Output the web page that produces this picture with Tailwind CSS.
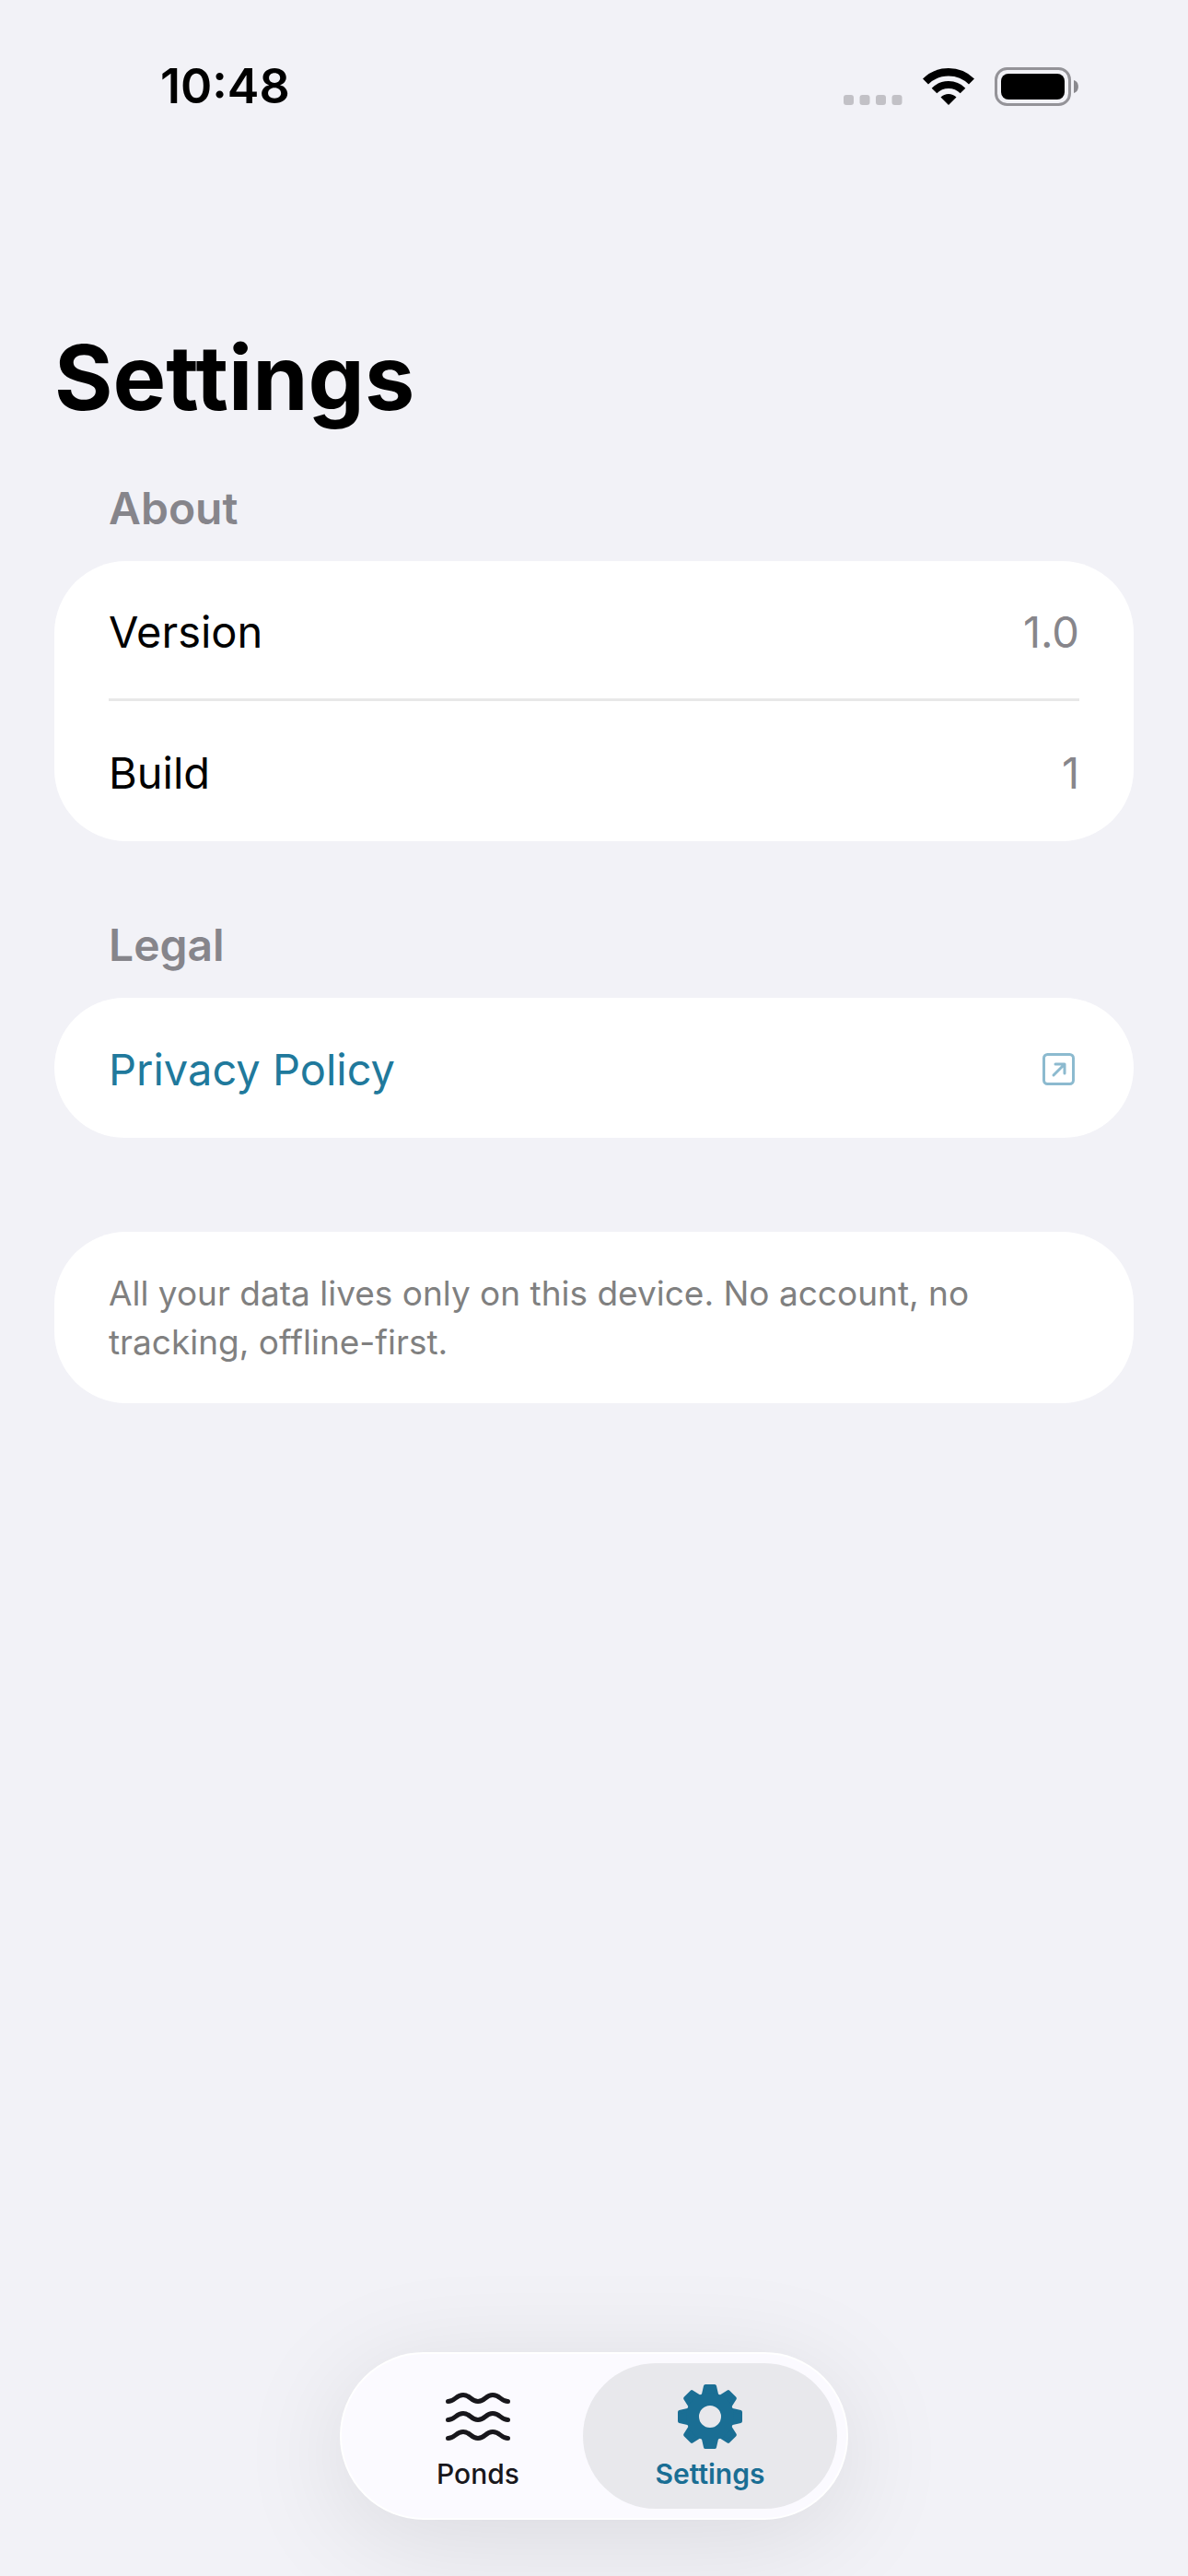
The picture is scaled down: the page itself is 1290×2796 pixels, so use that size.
<!DOCTYPE html>
<html lang="en">

<head>
    <meta charset="UTF-8" />
    <meta name="viewport" content="width=device-width, initial-scale=1.0" />
    <title>Settings</title>
    <script src="https://cdn.jsdelivr.net/npm/@tailwindcss/browser@4"></script>
</head>

<body class="bg-[#f2f2f7] min-h-screen flex flex-col font-['Inter',sans-serif] text-black">
    <!-- Status bar -->
    <div class="flex items-center justify-between h-[188px] pl-[174px] pr-[118px]">
        <time class="text-[52px] leading-[60px] font-semibold">10:48</time>
        <div class="flex items-center gap-[22px]">
            <svg class="w-16 h-[42px]" viewBox="0 0 64 42" fill="#c2c1c6" aria-hidden="true">
                <rect x="0" y="30" width="11" height="11" rx="3" />
                <rect x="17.5" y="30" width="11" height="11" rx="3" />
                <rect x="35" y="30" width="11" height="11" rx="3" />
                <rect x="52.5" y="30" width="11" height="11" rx="3" />
            </svg>
            <svg class="w-14 h-[42px]" viewBox="0 0 56 42" aria-hidden="true">
                <path d="M28 41 L19.5 32.5 A12 12 0 0 1 36.5 32.5 Z" />
                <path d="M12.5 25.5 A22 22 0 0 1 43.5 25.5" fill="none" stroke="#000" stroke-width="8" />
                <path d="M3 15.5 A35.5 35.5 0 0 1 53 15.5" fill="none" stroke="#000" stroke-width="8.5" />
            </svg>
            <svg class="w-[92px] h-[42px]" viewBox="0 0 92 42" aria-hidden="true">
                <rect x="1.5" y="1.5" width="80" height="39" rx="12" fill="none" stroke="#949398" stroke-width="3" />
                <rect x="7" y="7" width="69" height="28" rx="8" />
                <path d="M86 14 C92.5 15.5 92.5 26.5 86 28 Z" fill="#8a898e" />
            </svg>
        </div>
    </div>

    <main class="px-[59px] pt-40">
        <h1 class="text-[97px] leading-[124px] font-bold">Settings</h1>

        <section>
            <h2 class="px-[59px] pt-[50px] pb-[27px] text-[48px] leading-[60px] font-semibold text-[#86858b]">About</h2>
            <dl class="bg-white rounded-[78px] px-[59px] text-[47px] leading-[60px]">
                <div class="flex items-center justify-between h-[152px] pt-1 border-b-3 border-[#e8e8e8]">
                    <dt>Version</dt>
                    <dd class="text-[#87868b]">1.0</dd>
                </div>
                <div class="flex items-center justify-between h-[152px] pt-1">
                    <dt>Build</dt>
                    <dd class="text-[#87868b]">1</dd>
                </div>
            </dl>
        </section>

        <section>
            <h2 class="px-[59px] pt-[83px] pb-[27px] text-[48px] leading-[60px] font-semibold text-[#86858b]">Legal</h2>
            <a href="#privacy" class="flex items-center justify-between h-[152px] pt-1 px-[59px] bg-white rounded-[78px] text-[47px] leading-[60px] text-[#20799c]">
                Privacy Policy
                <svg class="w-9 h-9 mr-1" viewBox="0 0 36 36" fill="none" stroke="#8cbacf" stroke-width="3" stroke-linecap="round" stroke-linejoin="round" aria-hidden="true">
                    <rect x="1.5" y="1.5" width="32" height="32" rx="4" />
                    <path d="M12 24 L24 12 M14 12 H24 V22" />
                </svg>
            </a>
        </section>

        <p class="mt-[102px] px-[59px] py-10 bg-white rounded-[78px] text-[37px] leading-[53px] text-[#808080]">All your data lives only on this device. No account, no tracking, offline-first.</p>
    </main>

    <!-- Tab bar -->
    <nav class="mt-auto mb-[61px] mx-auto flex p-[10px] rounded-full bg-[#fbfaff] border-2 border-white shadow-[0_20px_120px_rgba(0,0,0,0.1)]">
        <a href="#ponds" class="flex flex-col items-center w-[276px] h-[158px] pt-[22px] rounded-full text-[#18171c]">
            <svg class="w-[72px] h-[72px]" viewBox="0 0 72 72" fill="none" stroke="currentColor" stroke-width="5" stroke-linecap="round" aria-hidden="true">
                <path id="wave" d="M3.500 19.500 C11 19.500 12 12.500 20 12.500 C28 12.500 28 19.500 36 19.500 C44 19.500 44 12.500 52 12.500 C60 12.500 61 19.500 68.500 19.500" />
                <use href="#wave" y="20" />
                <use href="#wave" y="40" />
            </svg>
            <span class="text-[30px] leading-[52px] font-medium">Ponds</span>
        </a>
        <a href="#settings" aria-current="page" class="flex flex-col items-center w-[276px] h-[158px] pt-[22px] -ml-6 rounded-full bg-[#e8e8ec] text-[#1a6e94]">
            <svg class="w-[72px] h-[72px]" viewBox="0 0 72 72" fill="currentColor" aria-hidden="true">
                <path id="tooth" d="M31 3 H41 L43.500 14 H28.500 Z" stroke="currentColor" stroke-width="4" stroke-linejoin="round" />
                <use href="#tooth" transform="rotate(45 36 36)" />
                <use href="#tooth" transform="rotate(90 36 36)" />
                <use href="#tooth" transform="rotate(135 36 36)" />
                <use href="#tooth" transform="rotate(180 36 36)" />
                <use href="#tooth" transform="rotate(225 36 36)" />
                <use href="#tooth" transform="rotate(270 36 36)" />
                <use href="#tooth" transform="rotate(315 36 36)" />
                <circle cx="36" cy="36" r="19" fill="none" stroke="currentColor" stroke-width="14" />
            </svg>
            <span class="text-[30px] leading-[52px] font-semibold">Settings</span>
        </a>
    </nav>
</body>

</html>
